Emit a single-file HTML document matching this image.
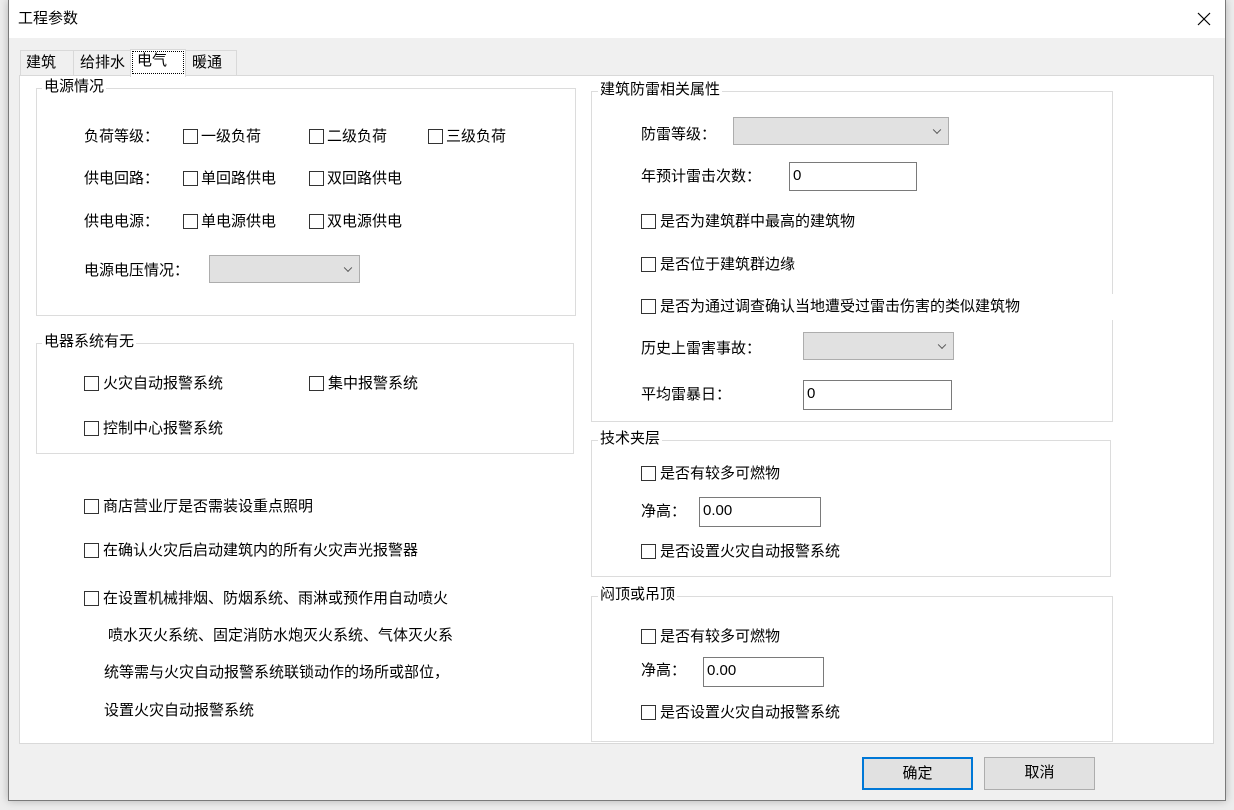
<!DOCTYPE html>
<html><head><meta charset="utf-8"><style>
*{margin:0;padding:0;box-sizing:border-box}
body{width:1234px;height:810px;background:#ededed;position:relative;overflow:hidden;font-family:"Liberation Sans","Noto Sans CJK SC","Microsoft YaHei",sans-serif;font-size:15px;color:#000}
.a{position:absolute}
.t{position:absolute;height:20px;line-height:20px;white-space:nowrap}
.cb{position:absolute;width:15px;height:15px;border:1px solid #333;background:#fff;margin-top:-1px}
.gb{position:absolute;border:1px solid #dcdcdc}
.gl{position:absolute;background:#fff;padding:0 2px;height:20px;line-height:20px;white-space:nowrap}
.sel{position:absolute;background:#e1e1e1;border:1px solid #adadad}
.sel:after{content:"";position:absolute;right:8px;top:50%;width:5px;height:5px;border-right:1px solid #555;border-bottom:1px solid #555;transform:translateY(-70%) rotate(45deg)}
.inp{position:absolute;background:#fff;border:1px solid #7a7a7a;padding-left:3px;line-height:26px;font-size:15px}
.btn{position:absolute;background:#e1e1e1;border:1px solid #adadad;text-align:center;line-height:30px}
</style></head><body>
<div class="a" style="left:8px;top:0;width:1218px;height:801px;background:#f0f0f0;border:1px solid #7a7a7a;border-top:none;box-shadow:0 0 8px rgba(0,0,0,.25)"></div>
<div class="a" style="left:9px;top:0;width:1216px;height:38px;background:#fff"></div>
<div class="t" style="left:18px;top:9px;font-size:15px">工程参数</div>
<svg class="a" style="left:1197px;top:12px" width="14" height="14"><path d="M1 1L13 13M13 1L1 13" stroke="#000" stroke-width="1.2"/></svg>
<div class="a" style="left:20px;top:50px;width:54px;height:26px;border:1px solid #d9d9d9;background:#f0f0f0"></div>
<div class="t" style="left:26px;top:53px">建筑</div>
<div class="a" style="left:73px;top:50px;width:58px;height:26px;border:1px solid #d9d9d9;background:#f0f0f0"></div>
<div class="t" style="left:80px;top:53px">给排水</div>
<div class="a" style="left:185px;top:50px;width:52px;height:26px;border:1px solid #d9d9d9;background:#f0f0f0"></div>
<div class="t" style="left:192px;top:53px">暖通</div>
<div class="a" style="left:19px;top:75px;width:1195px;height:669px;background:#fff;border:1px solid #d9d9d9"></div>
<div class="a" style="left:130px;top:49px;width:56px;height:28px;background:#fff;border:1px solid #d9d9d9;border-bottom:none"></div>
<div class="a" style="left:132px;top:51px;width:52px;height:23px;border:1px dotted #000"></div>
<div class="t" style="left:137px;top:51px">电气</div>

<div class="gb" style="left:36px;top:88px;width:540px;height:228px"></div>
<div class="gl" style="left:42px;top:77px">电源情况</div>
<div class="t" style="left:84px;top:127px">负荷等级：</div>
<div class="cb" style="left:183px;top:130px"></div><div class="t" style="left:201px;top:127px">一级负荷</div>
<div class="cb" style="left:309px;top:130px"></div><div class="t" style="left:327px;top:127px">二级负荷</div>
<div class="cb" style="left:428px;top:130px"></div><div class="t" style="left:446px;top:127px">三级负荷</div>
<div class="t" style="left:84px;top:169px">供电回路：</div>
<div class="cb" style="left:183px;top:172px"></div><div class="t" style="left:201px;top:169px">单回路供电</div>
<div class="cb" style="left:309px;top:172px"></div><div class="t" style="left:327px;top:169px">双回路供电</div>
<div class="t" style="left:84px;top:212px">供电电源：</div>
<div class="cb" style="left:183px;top:215px"></div><div class="t" style="left:201px;top:212px">单电源供电</div>
<div class="cb" style="left:309px;top:215px"></div><div class="t" style="left:327px;top:212px">双电源供电</div>
<div class="t" style="left:84px;top:261px">电源电压情况：</div>
<div class="sel" style="left:209px;top:255px;width:151px;height:28px"></div>

<div class="gb" style="left:36px;top:343px;width:538px;height:111px"></div>
<div class="gl" style="left:42px;top:332px">电器系统有无</div>
<div class="cb" style="left:84px;top:377px"></div><div class="t" style="left:103px;top:374px">火灾自动报警系统</div>
<div class="cb" style="left:309px;top:377px"></div><div class="t" style="left:328px;top:374px">集中报警系统</div>
<div class="cb" style="left:84px;top:422px"></div><div class="t" style="left:103px;top:419px">控制中心报警系统</div>

<div class="cb" style="left:84px;top:500px"></div><div class="t" style="left:103px;top:497px">商店营业厅是否需装设重点照明</div>
<div class="cb" style="left:84px;top:544px"></div><div class="t" style="left:103px;top:541px">在确认火灾后启动建筑内的所有火灾声光报警器</div>
<div class="cb" style="left:84px;top:592px"></div><div class="t" style="left:103px;top:589px">在设置机械排烟、防烟系统、雨淋或预作用自动喷火</div>
<div class="t" style="left:108px;top:626px">喷水灭火系统、固定消防水炮灭火系统、气体灭火系</div>
<div class="t" style="left:104px;top:663px">统等需与火灾自动报警系统联锁动作的场所或部位，</div>
<div class="t" style="left:104px;top:701px">设置火灾自动报警系统</div>

<div class="gb" style="left:591px;top:91px;width:522px;height:331px"></div>
<div class="gl" style="left:598px;top:80px">建筑防雷相关属性</div>
<div class="t" style="left:641px;top:125px">防雷等级：</div>
<div class="sel" style="left:733px;top:117px;width:216px;height:28px"></div>
<div class="t" style="left:641px;top:167px">年预计雷击次数：</div>
<div class="inp" style="left:789px;top:162px;width:128px;height:29px">0</div>
<div class="cb" style="left:641px;top:215px"></div><div class="t" style="left:660px;top:212px">是否为建筑群中最高的建筑物</div>
<div class="cb" style="left:641px;top:258px"></div><div class="t" style="left:660px;top:255px">是否位于建筑群边缘</div>
<div class="a" style="left:1110px;top:294px;width:6px;height:26px;background:#fff"></div>
<div class="cb" style="left:641px;top:300px"></div><div class="t" style="left:660px;top:297px">是否为通过调查确认当地遭受过雷击伤害的类似建筑物</div>
<div class="t" style="left:641px;top:339px">历史上雷害事故：</div>
<div class="sel" style="left:803px;top:332px;width:151px;height:28px"></div>
<div class="t" style="left:641px;top:385px">平均雷暴日：</div>
<div class="inp" style="left:803px;top:380px;width:149px;height:30px">0</div>

<div class="gb" style="left:591px;top:440px;width:520px;height:137px"></div>
<div class="gl" style="left:598px;top:429px">技术夹层</div>
<div class="cb" style="left:641px;top:467px"></div><div class="t" style="left:660px;top:464px">是否有较多可燃物</div>
<div class="t" style="left:641px;top:502px">净高：</div>
<div class="inp" style="left:699px;top:497px;width:122px;height:30px">0.00</div>
<div class="cb" style="left:641px;top:545px"></div><div class="t" style="left:660px;top:542px">是否设置火灾自动报警系统</div>

<div class="gb" style="left:591px;top:596px;width:522px;height:146px"></div>
<div class="gl" style="left:598px;top:585px">闷顶或吊顶</div>
<div class="cb" style="left:641px;top:630px"></div><div class="t" style="left:660px;top:627px">是否有较多可燃物</div>
<div class="t" style="left:641px;top:661px">净高：</div>
<div class="inp" style="left:703px;top:657px;width:121px;height:30px">0.00</div>
<div class="cb" style="left:641px;top:706px"></div><div class="t" style="left:660px;top:703px">是否设置火灾自动报警系统</div>

<div class="btn" style="left:862px;top:757px;width:111px;height:33px;border:2px solid #0078d7;line-height:29px">确定</div>
<div class="btn" style="left:984px;top:757px;width:111px;height:33px">取消</div>
</body></html>
